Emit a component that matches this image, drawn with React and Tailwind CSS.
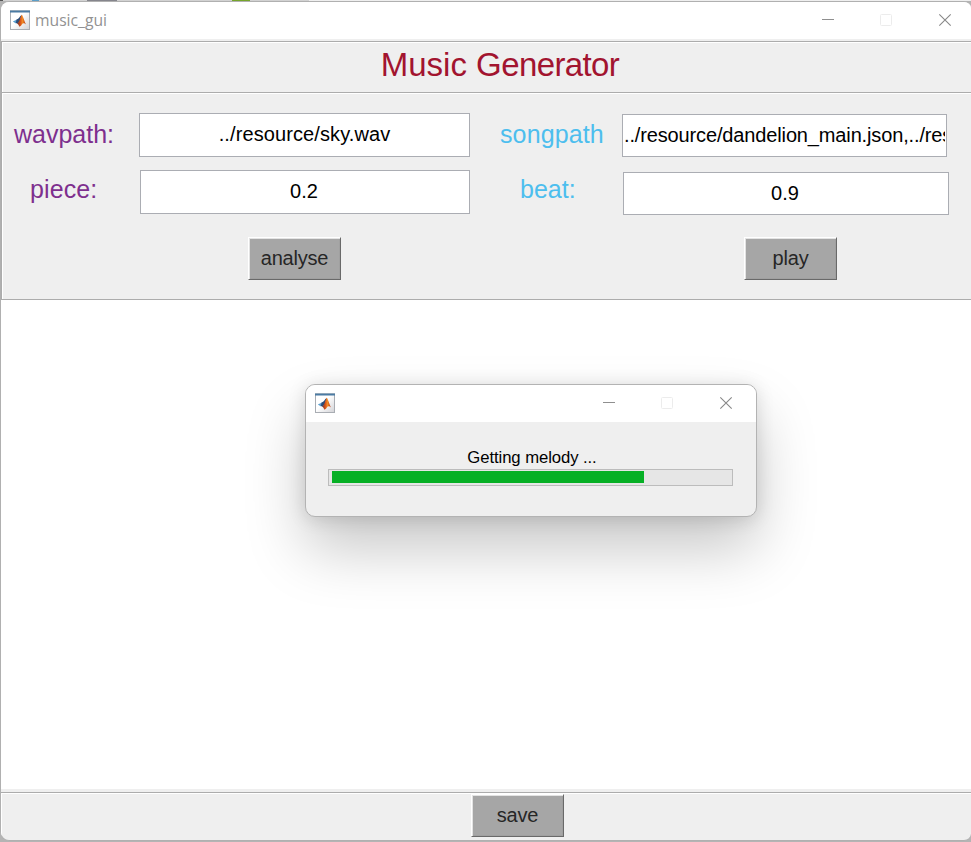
import React from "react";

function MatlabIcon() {
  return (
    <svg width="20" height="20" viewBox="0 0 20 20" className="block shrink-0">
      <defs>
        <linearGradient id="frame" x1="0" y1="0" x2="1" y2="1">
          <stop offset="0.45" stopColor="#ffffff" />
          <stop offset="1" stopColor="#d2d2d6" />
        </linearGradient>
        <linearGradient id="flame" x1="0" y1="0" x2="1" y2="0">
          <stop offset="0" stopColor="#6b2a2c" />
          <stop offset="0.4" stopColor="#dd5a1c" />
          <stop offset="0.6" stopColor="#f08a25" />
          <stop offset="1" stopColor="#b32c12" />
        </linearGradient>
      </defs>
      <rect x="0.5" y="0.5" width="19" height="19" fill="url(#frame)" stroke="#a9adb3" />
      <rect x="0" y="0" width="20" height="1" fill="#8fa5b8" />
      <rect x="0" y="1" width="20" height="1.5" fill="#4b7ba3" />
      <path d="M2.8 11.6 L7 9.4 L8.6 11.6 L6 13.4 Z" fill="#5a9fd0" />
      <path d="M6.6 9.6 C9 8.8 9.8 6.2 11.6 5 L10 11 L7.6 13.6 L5.8 13.1 Z" fill="#2d4d78" />
      <path d="M11.6 4.7 C12.8 4.7 14 10.8 16.2 14.6 C14.4 12.8 13 12.8 11.8 14.4 C11 15.8 10 16.6 9.2 16.5 C8.6 15 8 14 7 13.6 C9.4 12.4 10.4 7.2 11.6 4.7 Z" fill="url(#flame)" />
    </svg>
  );
}

function WindowControls() {
  return (
    <svg width="130" height="14" viewBox="0 0 130 14" fill="none" className="block shrink-0">
      <path d="M0 6.5 H12" stroke="#8f8f8f" />
      <rect x="58.5" y="1.5" width="11" height="11" rx="1" stroke="#ececec" />
      <path d="M117.3 1.3 L128.7 12.7 M128.7 1.3 L117.3 12.7" stroke="#888888" strokeWidth="1.1" />
    </svg>
  );
}

function Field({ value, className }) {
  return (
    <div className={`flex items-center overflow-hidden border border-[#abadb3] bg-white px-px pb-[2px] text-[20px] leading-6 whitespace-nowrap text-black ${className}`}>
      <span className="min-w-0 flex-1 overflow-hidden">{value}</span>
    </div>
  );
}

function PushButton({ children }) {
  return (
    <button className="h-[43px] w-[93px] border border-t-white border-l-white border-r-[#696969] border-b-[#696969] bg-[#a6a6a6] pb-[2px] text-[20px] leading-6 tracking-[-0.2px] text-[#262626] shadow-[inset_1px_1px_0_#e3e3e3,inset_-1px_-1px_0_#a0a0a0]">
      {children}
    </button>
  );
}

function ProgressDialog() {
  return (
    <div className="absolute top-[384px] left-[305px] h-[133px] w-[452px] overflow-hidden rounded-[10px] border border-[#b3b3b3] bg-[#efefef] shadow-[0_32px_60px_rgba(0,0,0,0.22),0_2px_18px_rgba(0,0,0,0.13)]">
      <div className="flex h-[37px] items-center justify-between bg-white pr-[23px] pb-[2px] pl-[9px]">
        <MatlabIcon />
        <WindowControls />
      </div>
      <div className="px-[22px] pt-[25px]">
        <p className="pl-[2px] text-center text-[16.7px] leading-[22px] tracking-[-0.08px] text-black">Getting melody ...</p>
        <div className="flex h-[17px] w-[405px] border border-[#bcbcbc] bg-[#e6e6e6] pt-px pb-[2px] pl-[3px]">
          <div className="h-full w-[312px] bg-[#06b025]" />
        </div>
      </div>
    </div>
  );
}

export default function App() {
  return (
    <div className="relative h-[842px] w-[971px] overflow-hidden bg-[#b4b4b4] font-['Liberation_Sans',Arial,sans-serif]">
      <div className="flex h-px bg-[#d2d2d2]">
        <div className="w-[3px] bg-[#555555]" />
        <div className="ml-[29px] w-[7px] bg-[#5b9fc9]" />
        <div className="ml-[48px] w-[30px] bg-[#85858c]" />
        <div className="ml-[115px] w-[18px] bg-[#76a52c]" />
        <div className="ml-[59px] flex-1 bg-[#efefef]" />
      </div>
      <div className="flex h-[840px] flex-col overflow-hidden rounded-[9px] rounded-tr-[7px] rounded-br-[7px] border-t border-b border-l border-[#b0b0b0] bg-[#efefef]">
        <header className="flex h-[37px] shrink-0 items-center justify-between bg-white pr-[19px] pb-[2px] pl-[9px]">
          <div className="flex items-center gap-[5px]">
            <MatlabIcon />
            <span className="font-['Open_Sans',sans-serif] text-[15.7px] leading-5 text-[#929292]">music_gui</span>
          </div>
          <WindowControls />
        </header>

        <section className="mt-[2px] h-[51px] shrink-0 border-t border-l border-[#acacac] shadow-[inset_1px_1px_0_#fff]">
          <h1 className="pt-[4px] pl-[27px] text-center text-[33px] leading-[38px] text-[#a2142f]">
            Music <span className="tracking-[-0.6px]">Generator</span>
          </h1>
        </section>

        <section className="h-[208px] shrink-0 border-t border-b border-l border-[#acacac] pt-[20px] shadow-[inset_1px_1px_0_#fff]">
          <div className="flex h-[44px] items-start text-[25px] leading-[42px]">
            <span className="ml-[12px] w-[125px] text-[#7e2f8e]">wavpath:</span>
            <Field value="../resource/sky.wav" className="h-[44px] w-[331px] text-center tracking-[0.1px]" />
            <span className="ml-[30px] w-[122px] tracking-[0.12px] text-[#4dbeee]">songpath</span>
            <Field value="../resource/dandelion_main.json,../res" className="mt-px h-[43px] w-[325px] tracking-[-0.14px]" />
          </div>
          <div className="mt-[13px] flex h-[45px] items-start text-[25px] leading-[38px]">
            <span className="ml-[28px] w-[110px] tracking-[0.1px] text-[#7e2f8e]">piece:</span>
            <Field value="0.2" className="h-[44px] w-[330px] pr-[3px] text-center" />
            <span className="ml-[50px] w-[103px] text-[#4dbeee]">beat:</span>
            <Field value="0.9" className="mt-[2px] h-[43px] w-[326px] pr-[3px] text-center" />
          </div>
          <div className="mt-[22px] flex gap-[403px] pl-[246px]">
            <PushButton>analyse</PushButton>
            <PushButton>play</PushButton>
          </div>
        </section>

        <main className="h-[489px] shrink-0 bg-white" />

        <footer className="mt-[3px] flex-1 border-t border-[#acacac] pt-px pl-[470px] shadow-[inset_1px_1px_0_#fff]">
          <PushButton>save</PushButton>
        </footer>
      </div>
      <ProgressDialog />
    </div>
  );
}
